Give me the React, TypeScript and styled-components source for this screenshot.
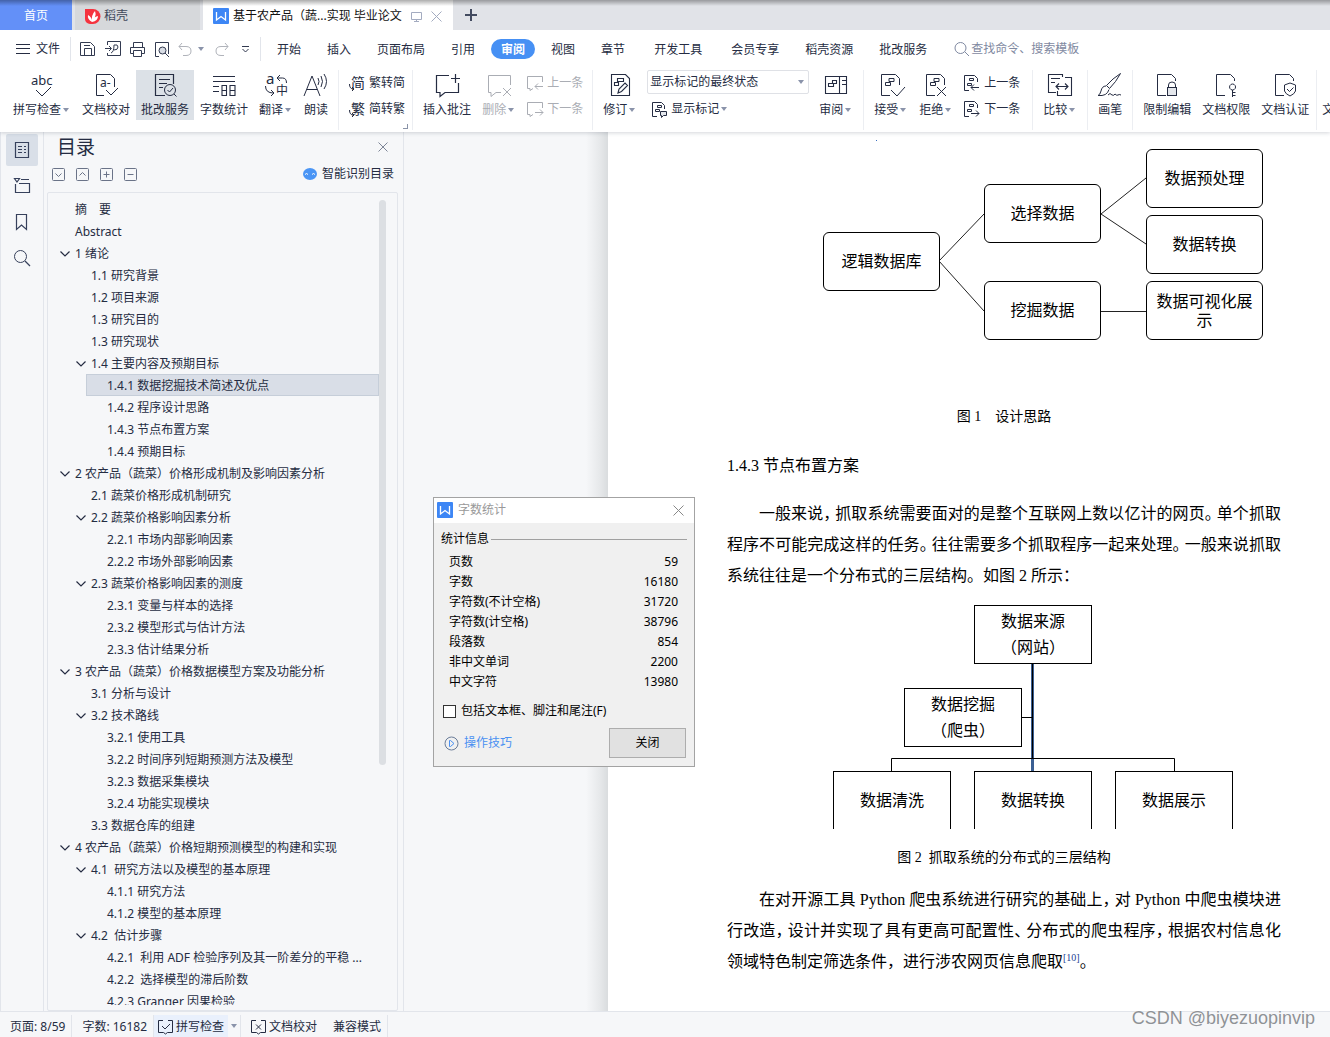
import React from "react";
import styled, { createGlobalStyle, css } from "styled-components";

const ui = `"Noto Sans", "Noto Sans CJK SC", sans-serif`;
const serif = `"Liberation Serif", "Noto Sans CJK SC", serif`;
const ink = "#252c42";
const line = "#e2e5eb";
const pane = "#f6f7f9";

const Global = createGlobalStyle`
  * { box-sizing: border-box; }
  html, body, #root { height: 100%; margin: 0; }
  body { font: 12px/18px ${ui}; color: ${ink}; background: ${pane}; overflow: hidden; }
  button, select, input { font: inherit; color: inherit; margin: 0; }
  button { border: 0; padding: 0; background: none; white-space: nowrap; cursor: pointer; }
`;

const App = styled.div`
  display: flex;
  flex-direction: column;
  height: 100vh;
  position: relative;
  overflow: hidden;
`;

/* ---------- icons ---------- */
const Svg = styled.svg`
  display: block;
  flex: none;
  overflow: visible;
  fill: none;
  stroke: currentColor;
  text {
    fill: currentColor;
    stroke: none;
    font-family: ${ui};
  }
`;
type IconProps = { w: number; h?: number; sw?: number; children: React.ReactNode };
const Icon = ({ w, h = w, sw = 1, children }: IconProps) => (
  <Svg width={w} height={h} viewBox={`0 0 ${w} ${h}`} strokeWidth={sw} aria-hidden="true">
    {children}
  </Svg>
);

const Caret = styled.span`
  width: 0;
  height: 0;
  border: 3px solid transparent;
  border-top: 4px solid #8a93aa;
  border-bottom: 0;
  margin: 0 2px;
`;

/* ---------- tab strip ---------- */
const TabStrip = styled.nav`
  display: flex;
  flex: none;
  height: 30px;
  gap: 3px;
  background: #e1e3e8;
  position: relative;
  &::after {
    content: "";
    position: absolute;
    inset: 0 0 auto;
    height: 6px;
    background: linear-gradient(rgba(0, 0, 0, 0.32), rgba(0, 0, 0, 0));
    pointer-events: none;
  }
`;
const Tab = styled.button<{ $kind: "home" | "idle" | "active"; $width: number }>`
  display: flex;
  align-items: center;
  gap: 4px;
  width: ${(p) => p.$width}px;
  padding: 2px 10px 0;
  background: ${(p) => ({ home: "#6390f8", idle: "#d6d8db", active: "#fff" })[p.$kind]};
  color: ${(p) => ({ home: "#fff", idle: "#41485a", active: "#111" })[p.$kind]};
  justify-content: ${(p) => (p.$kind === "home" ? "center" : "flex-start")};
`;
const TabTools = styled.span`
  display: flex;
  align-items: center;
  gap: 9px;
  margin-left: 5px;
  color: #a3abc0;
`;
const NewTab = styled.button`
  width: 30px;
  display: grid;
  place-items: center;
  color: #434b60;
`;

const Wlogo = () => (
  <Icon w={16}>
    <rect width="16" height="16" rx="1" fill="#3d86f5" stroke="none" />
    <path d="M3.500 4v8l4.500-3.500 4.500 3.500V4" stroke="#fff" strokeWidth="1.300" />
  </Icon>
);

/* ---------- menu row ---------- */
const MenuRow = styled.div`
  display: flex;
  flex: none;
  align-items: center;
  height: 36px;
  padding: 2px 0 0 16px;
  background: #fff;
`;
const FileButton = styled.button`
  display: flex;
  align-items: center;
  gap: 6px;
`;
const QuickBar = styled.div`
  display: flex;
  align-items: center;
  gap: 9px;
  height: 24px;
  margin-left: 10px;
  padding: 0 9px;
  width: 191px;
  border: solid ${line};
  border-width: 0 1px;
`;
const QuickButton = styled.button<{ $dim?: boolean }>`
  display: flex;
  align-items: center;
  gap: 4px;
  color: ${(p) => (p.$dim ? "#b0b3ba" : "#323a50")};
`;
const Menus = styled.div`
  display: flex;
  align-items: center;
  margin-left: 6px;
  gap: 6px;
`;
const MenuItem = styled.button<{ $on?: boolean; $wide?: boolean }>`
  height: 20px;
  line-height: 20px;
  padding: 1px 10px 0;
  border-radius: 10px;
  margin-left: ${(p) => (p.$wide ? 3 : 0)}px;
  ${(p) => p.$on && css`background: #4690f4; color: #fff; font-weight: 700;`}
`;
const Search = styled.label`
  display: flex;
  align-items: center;
  gap: 1px;
  margin-left: 17px;
  color: #7f89a1;
  input {
    width: 130px;
    padding: 0;
    border: 0;
    outline: 0;
    background: none;
  }
  input::placeholder { color: #7f89a1; opacity: 1; }
`;

/* ---------- ribbon ---------- */
const Ribbon = styled.div`
  display: flex;
  flex: none;
  height: 66px;
  padding: 4px 0 0 8px;
  background: #fff;
  position: relative;
  z-index: 2;
  box-shadow: 0 1px 4px rgba(40, 50, 70, 0.2);
  overflow: hidden;
  clip-path: inset(0 0 -6px 0);
`;
const Big = styled.button<{ $on?: boolean; $dim?: boolean }>`
  display: flex;
  flex: none;
  flex-direction: column;
  align-items: center;
  gap: 4px;
  height: 50px;
  padding: 3px 5px 1px;
  margin-right: 1px;
  background: ${(p) => (p.$on ? "#dce1e7" : "none")};
  color: ${(p) => (p.$dim ? "#aaadb4" : ink)};
  &:last-child { padding-left: 0; }
`;
const Label = styled.span`
  display: flex;
  align-items: center;
  line-height: 18px;
`;
const Stack = styled.div<{ $left?: number; $right?: number }>`
  display: flex;
  flex: none;
  flex-direction: column;
  gap: 2px;
  height: 50px;
  padding: 0 ${(p) => p.$right ?? 0}px 0 ${(p) => p.$left ?? 0}px;
`;
const Small = styled.button<{ $dim?: boolean }>`
  display: flex;
  align-items: center;
  gap: 4px;
  height: 24px;
  padding: 2px 5px 0;
  color: ${(p) => (p.$dim ? "#aaadb4" : ink)};
`;
const Rule = styled.span<{ $tight?: boolean }>`
  flex: none;
  width: 1px;
  height: 60px;
  margin: 0 5px 0 ${(p) => (p.$tight ? 1 : 4)}px;
  background: #eceef2;
`;
const Launcher = styled.span`
  flex: none;
  width: 5px;
  height: 5px;
  margin: 54px 0 0 -7px;
  border: solid #8a93a8;
  border-width: 0 1px 1px 0;
`;
const Picker = styled.div`
  display: flex;
  align-items: center;
  width: 162px;
  height: 24px;
  margin-right: 5px;
  padding-right: 2px;
  border: 1px solid #dfe1e6;
  border-radius: 2px;
  select {
    appearance: none;
    flex: 1;
    min-width: 0;
    padding: 0 2px;
    border: 0;
    outline: 0;
    background: none;
  }
`;

const Spell = () => (
  <Icon w={24}>
    <text x="1" y="12" fontSize="13">abc</text>
    <path d="M6 17l6 6 9-9" />
  </Icon>
);
const Proof = () => (
  <Icon w={24}>
    <path d="M10 22.500H2.500v-21h14l4 4V14M12 17l5 5 7-7" />
    <text x="6" y="14" fontSize="12">a-</text>
  </Icon>
);
const Review = () => (
  <Icon w={24}>
    <path d="M12 22.500H2.500v-21h18V11M6 6.500h11M6 10.500h8M6 14.500h4" strokeWidth="1.200" />
    <circle cx="17" cy="17" r="5.500" />
    <path d="M14.500 17l2 2 3.500-4M21 21l2.500 2.500" />
  </Icon>
);
const Count = () => (
  <Icon w={24}>
    <path d="M1 3.500h22M1 8.500h22M1 13.500h6M1 18.500h6M10 12.500h4.500v10H10zM18 12.500h5v10h-5zM10 17.500h4.500M18 17.500h5" strokeWidth="1.100" />
  </Icon>
);
const Translate = () => (
  <Icon w={24}>
    <text x="2" y="11" fontSize="15">a</text>
    <text x="12" y="22" fontSize="12">中</text>
    <path d="M16 2l-3 3 3 3M13.500 5h5q4 0 4 5M1.500 13q0 7 8 7M7 17l3 3-3 3" />
  </Icon>
);
const Read = () => (
  <Icon w={24}>
    <path d="M0 23L8 3l8 20M3 16.500h10M14 5q2 3.500 0 7M17 3q3 5.500 0 11M20 1q5 7.500 0 15" />
  </Icon>
);
const Glyph = ({ c }: { c: string }) => (
  <Icon w={16}>
    <text x="2" y="13" fontSize="14">{c}</text>
    <path d="M.5 9q0 5 4 5M3 12l2 2-2 2" />
  </Icon>
);
const Bubble = ({ mark, w = 24 }: { mark: "plus" | "x" | "prev" | "next"; w?: number }) =>
  w === 24 ? (
    <Icon w={24}>
      {mark === "plus" ? (
        <path d="M14 2.500H1.500v17H5V23.500l5-4h13.500V10M20.500 1v9M16 5.500h9" strokeWidth="1.200" />
      ) : (
        <path d="M23.500 12V2.500h-22v17H4V23.500l5-4h5M16 15l8 8M24 15l-8 8" />
      )}
    </Icon>
  ) : (
    <Icon w={16}>
      <path d="M15.500 7V1.500H.5v12H3V15.500l3-2" />
      <path d={mark === "prev" ? "M8 11.500h8M11 8.500l-3 3 3 3" : "M8 11.500h8M13 8.500l3 3-3 3"} />
    </Icon>
  );
const doc = "M11 22.500H2.500v-21h14l4 4";
const tracks = "M10 5.500h5v3h-5zM6.500 9.500h5v3h-5z";
const Revise = () => (
  <Icon w={24}>
    <path d="M3.500 1.500h14l4 4v17h-18zM9.500 5.500h6v3h-6zM6.500 9.500h4v3h-4zM10 20l1-4 6-6 2.500 2.500-6 6z" strokeWidth="1.100" />
  </Icon>
);
const ReviewPane = () => (
  <Icon w={24}>
    <path d="M1.500 3.500h21v17h-21zM15.500 3.500v17M8.500 7.500h4v3h-4zM4.500 10.500h5v3h-5zM18 7.500h4M18 11.500h4" strokeWidth="1.100" />
  </Icon>
);
const DocMark = ({ d }: { d: string }) => (
  <Icon w={24}>
    <path d={`${doc}V12${tracks}`} />
    <path d={d} />
  </Icon>
);
const SmallMark = ({ d }: { d: string }) => (
  <Icon w={16}>
    <path d="M5 15.500H.5v-15h10l3 3V7M5.500 3.500h4v2h-4zM3.500 8.500h4v2h-4z" />
    <path d={d} />
  </Icon>
);
const Compare = () => (
  <Icon w={24}>
    <path d="M8 19.500H.5v-18h14V4M3 5.500h9M3 9.500h4M17 4.500h6.500v18h-14V18M8 13.500h12M11 10.500l-3 3 3 3M17 10.500l3 3-3 3" strokeWidth="1.100" />
  </Icon>
);
const Brush = () => (
  <Icon w={24}>
    <path d="M22.500.5q-8 5-14 12l3 3Q18 9 22.500.5zM8 13q-4 0-5 5-1 4-3 4.500 9 1 11-6M10 22q2-3 4 0 2 1 3-1 2 2 3 1 1-1 3 0" />
  </Icon>
);
const Guard = ({ kind }: { kind: "lock" | "key" | "shield" }) => (
  <Icon w={24}>
    <path d={`${doc}V8`} />
    {kind === "lock" && (
      <>
        <path d="M13.500 15v-3q0-3 3.500-3t3.500 3v3" />
        <rect x="12.500" y="14.500" width="9" height="8" fill="#e4e7ec" />
      </>
    )}
    {kind === "key" && <path d="M18.500 17v7M18.500 19.500h3M18.500 22.500h3M18.500 17a3 3 0 1 1 .1 0z" />}
    {kind === "shield" && <path d="M11.500 12l5.500-2 5.500 2v6q-1 3-5.500 5-4.500-2-5.500-5zM14 16l2.500 2.500 4-4" />}
  </Icon>
);

/* ---------- body ---------- */
const Body = styled.div`
  display: flex;
  flex: 1;
  min-height: 0;
`;
const Rail = styled.aside`
  display: flex;
  flex: none;
  flex-direction: column;
  align-items: center;
  gap: 4px;
  width: 44px;
  padding-top: 2px;
  border: solid ${line};
  border-width: 0 1px;
`;
const RailButton = styled.button<{ $on?: boolean }>`
  display: grid;
  place-items: center;
  width: 32px;
  height: 32px;
  border-radius: 2px;
  color: #37415c;
  background: ${(p) => (p.$on ? "#d9dfe8" : "none")};
`;
const Outline = styled.section`
  display: flex;
  flex: none;
  flex-direction: column;
  width: 360px;
  padding: 0 5px 0 3px;
  border-right: 1px solid ${line};
`;
const OutlineHead = styled.div`
  display: flex;
  align-items: center;
  justify-content: space-between;
  height: 28px;
  padding: 2px 10px 0;
  h2 {
    margin: 0;
    font-size: 19px;
    font-weight: 400;
    line-height: 26px;
  }
`;
const OutlineTools = styled.div`
  display: flex;
  align-items: center;
  gap: 11px;
  height: 28px;
  padding: 0 4px 0 5px;
  color: #6a7388;
`;
const Smart = styled.button`
  display: flex;
  align-items: center;
  gap: 5px;
  margin-left: auto;
  color: ${ink};
`;
const TreeBox = styled.div`
  display: flex;
  flex: 1;
  min-height: 0;
  margin-top: 4px;
  padding: 5px 10px 5px 0;
  border: 1px solid ${line};
  border-radius: 2px;
`;
const Tree = styled.ul`
  flex: 1;
  min-width: 0;
  margin: 0;
  padding: 0;
  overflow: hidden;
  list-style: none;
`;
const Node = styled.li<{ $level: number; $on?: boolean }>`
  height: 22px;
  margin-left: ${(p) => 16 * p.$level - 10}px;
  background: ${(p) => (p.$on ? "#d9dee7" : "none")};
  box-shadow: ${(p) => (p.$on ? "inset 0 0 0 1px #c6ced9" : "none")};
  button {
    display: flex;
    align-items: center;
    width: 100%;
    height: 22px;
    padding: 2px 0 0 5px;
    white-space: pre;
  }
`;
const Twisty = styled.span`
  width: 16px;
  padding-left: 1px;
`;
const Thumb = styled.span`
  flex: none;
  width: 7px;
  height: 565px;
  margin: 2px 1px 0 0;
  border-radius: 4px;
  background: #dcdfe3;
`;

const Workspace = styled.main`
  display: flex;
  flex: 1;
  min-width: 0;
  &::before {
    content: "";
    flex: none;
    width: 204px;
    background: linear-gradient(to left, #d9dcde, #e6e8ea 8px, ${pane} 22px);
  }
`;
const Paper = styled.article`
  flex: 1;
  min-width: 0;
  padding: 0 0 0 119px;
  overflow: hidden;
  background: #fff;
  color: #000;
  font-family: ${serif};
  font-size: 16px;
`;
const Column = styled.div`
  width: 554px;
  h3 {
    margin: 23px 0 17px;
    font-size: 16px;
    font-weight: 400;
    line-height: 31px;
  }
  p { margin: 0; }
`;
const Figure = styled.figure<{ $height: number; $gap: number }>`
  margin: 0 0 16px;
  figcaption {
    padding-top: ${(p) => p.$gap}px;
    font-size: 14px;
    line-height: 20px;
    text-align: center;
    white-space: pre;
  }
  > div {
    position: relative;
    height: ${(p) => p.$height}px;
  }
  > div > svg {
    position: absolute;
    inset: 0;
    width: 100%;
    height: 100%;
    fill: none;
    stroke: #222;
  }
`;
const Shape = styled.div<{ $x: number; $y: number; $round?: boolean; $open?: boolean }>`
  position: absolute;
  left: ${(p) => p.$x}px;
  top: ${(p) => p.$y}px;
  display: grid;
  place-items: center;
  width: ${(p) => (p.$round ? 117 : 118)}px;
  height: ${(p) => (p.$open ? 58 : 59)}px;
  padding: 0 4px;
  border: 1px solid #000;
  border-bottom-width: ${(p) => (p.$open ? 0 : 1)}px;
  border-radius: ${(p) => (p.$round ? 6 : 0)}px;
  background: #fff;
  line-height: ${(p) => (p.$round ? 19 : 26)}px;
  text-align: center;
`;
const LineBox = styled.span<{ $first?: boolean; $last?: boolean }>`
  display: block;
  line-height: 31px;
  white-space: nowrap;
  padding-left: ${(p) => (p.$first ? 32 : 0)}px;
  text-align-last: ${(p) => (p.$last ? "left" : "justify")};
  sup {
    font-size: 10px;
    line-height: 0;
    color: #1c3f94;
  }
`;
/* Compressed full-width punctuation used in justified lines. */
const Mark = styled.span`
  padding-right: 4px;
  font-feature-settings: "halt";
`;
const Line = ({ text, first }: { text: string; first?: boolean }) => (
  <LineBox $first={first}>
    {text.split(/([，。、])/).map((part, i) => (i % 2 ? <Mark key={i}>{part}</Mark> : part))}
  </LineBox>
);

/* ---------- dialog ---------- */
const Dialog = styled.section`
  position: absolute;
  z-index: 3;
  left: 433px;
  top: 497px;
  width: 262px;
  border: 1px solid #a3a3a3;
  background: #f0f0f0;
  color: #000;
`;
const DialogTitle = styled.header`
  display: flex;
  align-items: center;
  gap: 5px;
  height: 25px;
  padding: 0 10px 1px 3px;
  background: #fff;
  color: #999;
  button { margin-left: auto; }
`;
const DialogBody = styled.div`
  padding: 8px 7px;
`;
const Legend = styled.div`
  display: flex;
  align-items: center;
  gap: 2px;
  line-height: 16px;
  &::after {
    content: "";
    flex: 1;
    height: 1px;
    background: #a0a0a0;
  }
`;
const Stats = styled.table`
  width: 100%;
  margin-top: 5px;
  border-collapse: collapse;
  th, td {
    height: 20px;
    padding: 0 9px 0 8px;
    font-weight: 400;
    line-height: 18px;
    text-align: left;
  }
  td { text-align: right; }
`;
const Check = styled.label`
  display: flex;
  align-items: center;
  gap: 5px;
  height: 20px;
  margin: 9px 0 0 2px;
  input {
    appearance: none;
    width: 13px;
    height: 13px;
    border: 1px solid #333;
    background: #fff;
  }
`;
const DialogFoot = styled.div`
  display: flex;
  align-items: center;
  justify-content: space-between;
  margin: 7px 1px 0 3px;
  a {
    display: flex;
    align-items: center;
    gap: 5px;
    color: #4a90f2;
    text-decoration: none;
  }
  button {
    width: 77px;
    height: 30px;
    border: 1px solid #adadad;
    background: #e1e1e1;
  }
`;

/* ---------- status bar ---------- */
const Status = styled.footer`
  display: flex;
  flex: none;
  align-items: center;
  height: 26px;
  padding: 3px 0 0;
  border-top: 1px solid ${line};
  background: ${pane};
`;
const StatusItem = styled.button<{ $on?: boolean; $split?: boolean; $bare?: boolean }>`
  display: flex;
  align-items: center;
  gap: 3px;
  height: 22px;
  padding: ${(p) => (p.$bare ? "0 1px" : p.$on ? "1px 4px 0" : "1px 6px 0 10px")};
  background: ${(p) => (p.$on ? "#e9f0fc" : "none")};
  border-right: ${(p) => (p.$split ? `1px solid ${line}` : 0)};
`;
const Watermark = styled.div`
  position: absolute;
  z-index: 4;
  right: 15px;
  bottom: 7px;
  font: 18px/24px "Liberation Sans", sans-serif;
  color: #8f9296;
  text-shadow: 0 0 1px #fff;
`;

/* ---------- data ---------- */
const menus = ["开始", "插入", "页面布局", "引用", "审阅", "视图", "章节", "开发工具", "会员专享", "稻壳资源", "批改服务"];

// [level, text, expandable]
const outline: [number, string, boolean?][] = [
  [1, "摘　要"],
  [1, "Abstract"],
  [1, "1 绪论", true],
  [2, "1.1 研究背景"],
  [2, "1.2 项目来源"],
  [2, "1.3 研究目的"],
  [2, "1.3 研究现状"],
  [2, "1.4 主要内容及预期目标", true],
  [3, "1.4.1 数据挖掘技术简述及优点"],
  [3, "1.4.2 程序设计思路"],
  [3, "1.4.3 节点布置方案"],
  [3, "1.4.4 预期目标"],
  [1, "2 农产品（蔬菜）价格形成机制及影响因素分析", true],
  [2, "2.1 蔬菜价格形成机制研究"],
  [2, "2.2 蔬菜价格影响因素分析", true],
  [3, "2.2.1 市场内部影响因素"],
  [3, "2.2.2 市场外部影响因素"],
  [2, "2.3 蔬菜价格影响因素的测度", true],
  [3, "2.3.1 变量与样本的选择"],
  [3, "2.3.2 模型形式与估计方法"],
  [3, "2.3.3 估计结果分析"],
  [1, "3 农产品（蔬菜）价格数据模型方案及功能分析", true],
  [2, "3.1 分析与设计"],
  [2, "3.2 技术路线", true],
  [3, "3.2.1 使用工具"],
  [3, "3.2.2 时间序列短期预测方法及模型"],
  [3, "3.2.3 数据采集模块"],
  [3, "3.2.4 功能实现模块"],
  [2, "3.3 数据仓库的组建"],
  [1, "4 农产品（蔬菜）价格短期预测模型的构建和实现", true],
  [2, "4.1  研究方法以及模型的基本原理", true],
  [3, "4.1.1 研究方法"],
  [3, "4.1.2 模型的基本原理"],
  [2, "4.2  估计步骤", true],
  [3, "4.2.1  利用 ADF 检验序列及其一阶差分的平稳 ..."],
  [3, "4.2.2  选择模型的滞后阶数"],
  [3, "4.2.3 Granger 因果检验"],
];

const stats: [string, number][] = [
  ["页数", 59],
  ["字数", 16180],
  ["字符数(不计空格)", 31720],
  ["字符数(计空格)", 38796],
  ["段落数", 854],
  ["非中文单词", 2200],
  ["中文字符", 13980],
];

const BigItem = ({ icon, text, caret, on, dim }: { icon: React.ReactNode; text: string; caret?: boolean; on?: boolean; dim?: boolean }) => (
  <Big $on={on} $dim={dim}>
    {icon}
    <Label>{text}{caret && <Caret />}</Label>
  </Big>
);

const boxMarks = ["M3.500 5.500l3 3 3-3", "M3.500 7.500l3-3 3 3", "M3.500 6.500h6M6.500 3.500v6", "M3.500 6.500h6"];
const boxNames = ["展开", "收起", "增加", "减少"];

export default function Writer() {
  return (
    <App>
      <Global />
      <TabStrip>
        <Tab $kind="home" $width={72}>首页</Tab>
        <Tab $kind="idle" $width={125}>
          <Icon w={15}>
            <path d="M0 0h8a7.500 7.500 0 0 1 0 15H5a5 5 0 0 1-5-5z" fill="#f5333f" stroke="none" />
            <path d="M7 13Q2 10 3 6q4 2 4 7Q6 6 10 2q2 5-3 11 1-5 6-6 0 5-6 6z" fill="#fff" stroke="none" />
          </Icon>
          稻壳
        </Tab>
        <Tab $kind="active" $width={250}>
          <Wlogo />
          基于农产品（蔬...实现 毕业论文
          <TabTools>
            <Icon w={11}><path d="M.5 1.500h10v7H.5zM5.500 8.500v2M3 10.500h5" /></Icon>
            <Icon w={11}><path d="M.5.5l10 10M10.500.5l-10 10" /></Icon>
          </TabTools>
        </Tab>
        <NewTab aria-label="新建">
          <Icon w={12} sw={2}><path d="M6 0v12M0 6h12" /></Icon>
        </NewTab>
      </TabStrip>

      <MenuRow>
        <FileButton>
          <Icon w={14}><path d="M0 2.500h14M0 6.500h14M0 11.500h14" /></Icon>
          文件
        </FileButton>
        <QuickBar>
          <QuickButton aria-label="保存">
            <Icon w={16}><path d="M.5 1.500h10l4 4v9H.5zM4.500 14V7.500h7V14M4 4.500h6" /></Icon>
          </QuickButton>
          <QuickButton aria-label="输出为PDF">
            <Icon w={16}><path d="M2.500 4V.5h13v14h-13V12M0 7.500h6M4 5l2.500 2.500L4 10M6 12q3-1 3-8 4-1 4 2t-4 3" /></Icon>
          </QuickButton>
          <QuickButton aria-label="打印">
            <Icon w={15}><path d="M3.500 5V.5h9V5M3.500 11.500h-3v-6h14v6h-3M3.500 8.500h8v6h-8z" /></Icon>
          </QuickButton>
          <QuickButton aria-label="打印预览">
            <Icon w={15}>
              <path d="M5 14.500H1.500V.5h13V12" />
              <circle cx="8.500" cy="8.500" r="3.500" fill="#d8dce4" />
              <path d="M11 11l4 4" />
            </Icon>
          </QuickButton>
          <QuickButton aria-label="撤销" $dim>
            <Icon w={14}><path d="M4 1L1 4.500 4 8M1 4.500h7q5 0 5 4.500t-5 4.500H5" /></Icon>
            <Caret />
          </QuickButton>
          <QuickButton aria-label="重做" $dim>
            <Icon w={14}><path d="M10 1l3 3.500L10 8M13 4.500H6Q1 4.500 1 9t5 4.500h3" /></Icon>
          </QuickButton>
          <QuickButton aria-label="自定义快速访问">
            <Icon w={15} h={7}><path d="M4 .5h7M4.500 3l3 3 3-3" /></Icon>
          </QuickButton>
        </QuickBar>
        <Menus>
          {menus.map((m) => (
            <MenuItem key={m} $on={m === "审阅"} $wide={m === "开发工具" || m === "会员专享"}>{m}</MenuItem>
          ))}
        </Menus>
        <Search>
          <Icon w={16}><circle cx="6.500" cy="7" r="5.500" /><path d="M11 11l4 4" /></Icon>
          <input aria-label="查找" placeholder="查找命令、搜索模板" />
        </Search>
      </MenuRow>

      <Ribbon>
        <BigItem icon={<Spell />} text="拼写检查" caret />
        <BigItem icon={<Proof />} text="文档校对" />
        <BigItem icon={<Review />} text="批改服务" on />
        <BigItem icon={<Count />} text="字数统计" />
        <BigItem icon={<Translate />} text="翻译" caret />
        <BigItem icon={<Read />} text="朗读" />
        <Rule />
        <Stack>
          <Small><Glyph c="简" />繁转简</Small>
          <Small><Glyph c="繁" />简转繁</Small>
        </Stack>
        <Launcher />
        <Rule />
        <BigItem icon={<Bubble mark="plus" />} text="插入批注" />
        <BigItem icon={<Bubble mark="x" />} text="删除" caret dim />
        <Stack>
          <Small $dim><Bubble mark="prev" w={16} />上一条</Small>
          <Small $dim><Bubble mark="next" w={16} />下一条</Small>
        </Stack>
        <Rule />
        <BigItem icon={<Revise />} text="修订" caret />
        <Stack $left={4}>
          <Picker>
            <select aria-label="显示状态"><option>显示标记的最终状态</option></select>
            <Caret />
          </Picker>
          <Small>
            <Icon w={15}>
              <path d="M5 14.500H.5V.5h9l3 3V7M5.500 3.500h4v2h-4zM3.500 7.500h4v2h-4z" />
              <path d="M8.500 9.500h6v4h-3l-2 2v-2h-1z" fill="#e4e7ec" />
            </Icon>
            <Label>显示标记<Caret /></Label>
          </Small>
        </Stack>
        <BigItem icon={<ReviewPane />} text="审阅" caret />
        <Rule />
        <BigItem icon={<DocMark d="M12 17l6 6 8-9" />} text="接受" caret />
        <BigItem icon={<DocMark d="M13 14l9 9M22 14l-9 9" />} text="拒绝" caret />
        <Stack $right={3}>
          <Small><SmallMark d="M7 12.500h8M10 9.500l-3 3 3 3" />上一条</Small>
          <Small><SmallMark d="M7 12.500h8M12 9.500l3 3-3 3" />下一条</Small>
        </Stack>
        <Rule />
        <BigItem icon={<Compare />} text="比较" caret />
        <Rule />
        <BigItem icon={<Brush />} text="画笔" />
        <Rule />
        <BigItem icon={<Guard kind="lock" />} text="限制编辑" />
        <BigItem icon={<Guard kind="key" />} text="文档权限" />
        <BigItem icon={<Guard kind="shield" />} text="文档认证" />
        <Rule $tight />
        <BigItem icon={<Icon w={12} h={24}>{null}</Icon>} text="文" />
      </Ribbon>

      <Body>
        <Rail>
          <RailButton $on aria-label="目录">
            <Icon w={16}><path d="M1.500.5h13v15h-13zM4 4.500h4M10 4.500h2M4 7.500h4M10 7.500h2M4 10.500h4M10 10.500h2" strokeWidth="1.200" /></Icon>
          </RailButton>
          <RailButton aria-label="章节">
            <Icon w={16}><path d="M.5.5h5L3 4zM7 1.500h8M1.500 6v8.500h14v-9H5" strokeWidth="1.200" /></Icon>
          </RailButton>
          <RailButton aria-label="书签">
            <Icon w={16}><path d="M2.500.5h10v15l-5-4.500-5 4.500z" strokeWidth="1.200" /></Icon>
          </RailButton>
          <RailButton aria-label="查找">
            <Icon w={16}><circle cx="6.500" cy="6.500" r="6" /><path d="M11 11l5 5" strokeWidth="1.200" /></Icon>
          </RailButton>
        </Rail>

        <Outline>
          <OutlineHead>
            <h2>目录</h2>
            <button aria-label="关闭目录">
              <Icon w={10}><path d="M.5.5l9 9M9.500.5l-9 9" stroke="#7d8597" /></Icon>
            </button>
          </OutlineHead>
          <OutlineTools>
            {boxMarks.map((d, i) => (
              <button key={d} aria-label={boxNames[i]}>
                <Icon w={13}><rect x=".5" y=".5" width="12" height="12" rx="1" /><path d={d} /></Icon>
              </button>
            ))}
            <Smart>
              <Icon w={14}>
                <ellipse cx="7" cy="7" rx="7" ry="6" fill="#4a95f5" stroke="none" />
                <path d="M2 7.500q1.500-2 3 0M9 7.500q1.500-2 3 0" stroke="#fff" />
              </Icon>
              智能识别目录
            </Smart>
          </OutlineTools>
          <TreeBox>
            <Tree>
              {outline.map(([level, text, open], i) => (
                <Node key={i} $level={level} $on={i === 8}>
                  <button>
                    <Twisty>
                      {open && <Icon w={10} h={6}><path d="M.5.5L5 5l4.500-4.500" strokeWidth="1.200" /></Icon>}
                    </Twisty>
                    {text}
                  </button>
                </Node>
              ))}
            </Tree>
            <Thumb />
          </TreeBox>
        </Outline>

        <Workspace>
          <Paper>
            <Column>
              <Figure $height={250} $gap={25}>
                <div>
                  <svg aria-hidden="true">
                    <path d="M212 129l45-47M212 129l45 50M374 82l45-36M374 82l45 30M374 179.500h45" />
                    <rect x="149" y="8" width="1" height="1" fill="#3a6fc0" stroke="none" />
                  </svg>
                  <Shape $round $x={96} $y={100}>逻辑数据库</Shape>
                  <Shape $round $x={257} $y={52}>选择数据</Shape>
                  <Shape $round $x={257} $y={149}>挖掘数据</Shape>
                  <Shape $round $x={419} $y={17}>数据预处理</Shape>
                  <Shape $round $x={419} $y={83}>数据转换</Shape>
                  <Shape $round $x={419} $y={149}>数据可视化展示</Shape>
                </div>
                <figcaption>图 1　设计思路</figcaption>
              </Figure>
              <h3>1.4.3 节点布置方案</h3>
              <p>
                <Line first text="一般来说，抓取系统需要面对的是整个互联网上数以亿计的网页。单个抓取" />
                <Line text="程序不可能完成这样的任务。往往需要多个抓取程序一起来处理。一般来说抓取" />
                <LineBox $last>系统往往是一个分布式的三层结构。如图 2 所示：</LineBox>
              </p>
              <Figure $height={256} $gap={1}>
                <div>
                  <svg aria-hidden="true">
                    <path d="M305.500 73v107" stroke="#3b5f93" strokeWidth="3" />
                    <path d="M305.500 73v95M294 126.500h12M164.500 180v-12.500h283V180" stroke="#000" />
                  </svg>
                  <Shape $x={247} $y={14}>数据来源<br />（网站）</Shape>
                  <Shape $x={177} $y={97}>数据挖掘<br />（爬虫）</Shape>
                  <Shape $open $x={106} $y={180}>数据清洗</Shape>
                  <Shape $open $x={247} $y={180}>数据转换</Shape>
                  <Shape $open $x={388} $y={180}>数据展示</Shape>
                </div>
                <figcaption>图 2  抓取系统的分布式的三层结构</figcaption>
              </Figure>
              <p>
                <Line first text="在对开源工具 Python 爬虫系统进行研究的基础上，对 Python 中爬虫模块进" />
                <Line text="行改造，设计并实现了具有更高可配置性、分布式的爬虫程序，根据农村信息化" />
                <LineBox $last>领域特色制定筛选条件，进行涉农网页信息爬取<sup>[10]</sup>。</LineBox>
              </p>
            </Column>
          </Paper>
        </Workspace>
      </Body>

      <Status>
        <StatusItem $split>页面: 8/59</StatusItem>
        <StatusItem $split>字数: 16182</StatusItem>
        <StatusItem $on>
          <Icon w={15} h={14}><path d="M5 .5H.5v12h5l2 1.500 2-1.500h5V.5H10M4 6l3 3 5-5" /></Icon>
          拼写检查
        </StatusItem>
        <StatusItem $split $bare aria-label="拼写选项"><Caret /></StatusItem>
        <StatusItem>
          <Icon w={15} h={14}><path d="M5 .5H.5v12h5l2 1.500 2-1.500h5V.5H10M5 4.500l5 5M10 4.500l-5 5" /></Icon>
          文档校对
        </StatusItem>
        <StatusItem $split>兼容模式</StatusItem>
      </Status>

      <Dialog role="dialog" aria-label="字数统计">
        <DialogTitle>
          <Wlogo />
          字数统计
          <button aria-label="关闭窗口">
            <Icon w={11}><path d="M.5.5l10 10M10.500.5l-10 10" stroke="#888" /></Icon>
          </button>
        </DialogTitle>
        <DialogBody>
          <Legend>统计信息</Legend>
          <Stats>
            <tbody>
              {stats.map(([k, v]) => (
                <tr key={k}><th scope="row">{k}</th><td>{v}</td></tr>
              ))}
            </tbody>
          </Stats>
          <Check><input type="checkbox" />包括文本框、脚注和尾注(F)</Check>
          <DialogFoot>
            <a href="#tips">
              <Icon w={15}>
                <circle cx="7.500" cy="7.500" r="6.500" stroke="#6b7d99" />
                <path d="M5.500 4.500v6h1l3.500-3-3.500-3z" stroke="#4a90f2" />
              </Icon>
              操作技巧
            </a>
            <button>关闭</button>
          </DialogFoot>
        </DialogBody>
      </Dialog>
      <Watermark>CSDN @biyezuopinvip</Watermark>
    </App>
  );
}
